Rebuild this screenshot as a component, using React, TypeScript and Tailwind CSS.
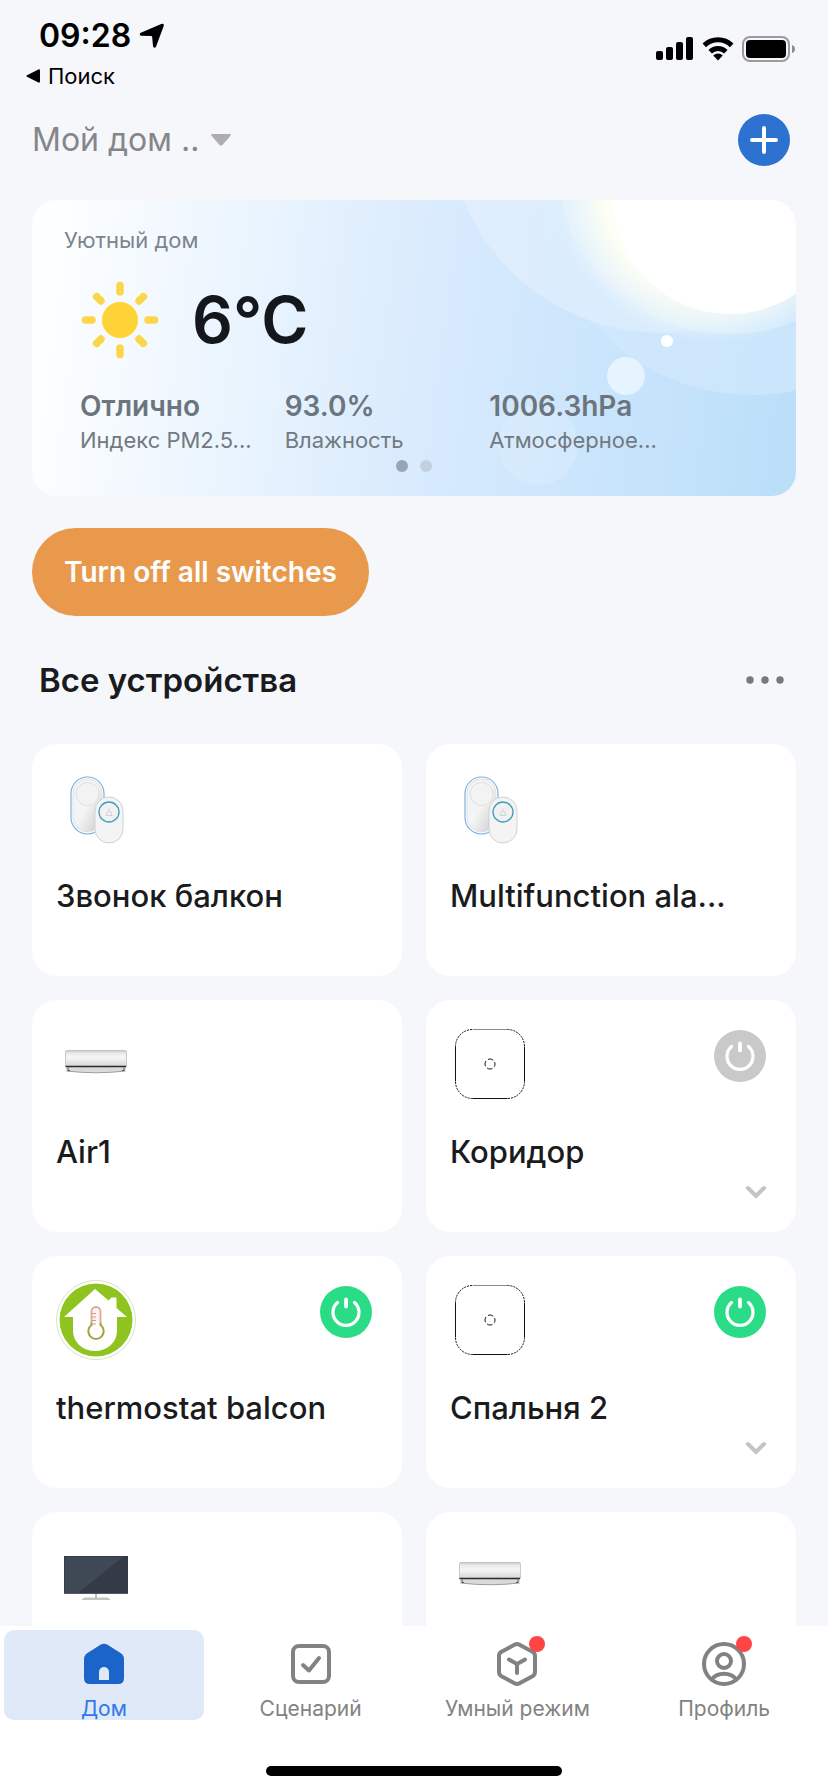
import { useState } from "react"

type Device = {
  id: number
  name?: string
  icon: "bell" | "air" | "router" | "thermostat" | "tv"
  power?: boolean
  expandable?: boolean
}

const initialDevices: Device[] = [
  { id: 1, name: "Звонок балкон", icon: "bell" },
  { id: 2, name: "Multifunction ala...", icon: "bell" },
  { id: 3, name: "Air1", icon: "air" },
  { id: 4, name: "Коридор", icon: "router", power: false, expandable: true },
  { id: 5, name: "thermostat balcon", icon: "thermostat", power: true },
  { id: 6, name: "Спальня 2", icon: "router", power: true, expandable: true },
  { id: 7, icon: "tv" },
  { id: 8, icon: "air" },
]

const weather = [
  { value: "Отлично", label: "Индекс PM2.5..." },
  { value: "93.0%", label: "Влажность" },
  { value: "1006.3hPa", label: "Атмосферное..." },
]

const tabs = [
  { id: "home", label: "Дом", badge: false },
  { id: "scene", label: "Сценарий", badge: false },
  { id: "smart", label: "Умный режим", badge: true },
  { id: "profile", label: "Профиль", badge: true },
]

function StatusBar() {
  return (
    <div className="flex items-start justify-between pt-4 text-black">
      <div>
        <div className="flex items-center gap-2 pl-[39px] text-[32px] leading-10 font-semibold">
          09:28
          <svg width="26" height="26" viewBox="0 0 26 26">
            <path d="M1.800 9.800 22.200 1.100Q25.600 0 24.600 3.200L17.200 23.200Q15.600 26.200 14 23.200L13.200 14.200Q13.100 13.100 12 13L2.400 12.800Q-0.600 11.800 1.800 9.800Z" />
          </svg>
        </div>
        <a href="#search" className="flex items-center gap-2 pl-[26px] text-[22px] leading-10">
          <svg width="14" height="14" viewBox="0 0 14 14">
            <path d="M1 6.200 12.400 0.400Q14 0 14 1.400V12.600Q14 14 12.400 13.600L1 7.800Q-0.400 7 1 6.200Z" />
          </svg>
          Поиск
        </a>
      </div>
      <div className="flex items-center gap-2 pt-5 pr-8">
        <svg width="38" height="26" viewBox="0 0 38 26">
          <rect x="0" y="15" width="7" height="9" rx="2" />
          <rect x="10" y="11" width="7" height="13" rx="2" />
          <rect x="20" y="6" width="7" height="18" rx="2" />
          <rect x="30" y="1" width="7" height="23" rx="2" />
        </svg>
        <svg width="32" height="26" viewBox="0 0 32 26">
          <path d="M16 24.500 11.200 19.600a6.800 6.800 0 0 1 9.600 0Z" />
          <path d="M8.200 15.800a11 11 0 0 1 15.600 0" fill="none" stroke="#000" strokeWidth="5" />
          <path d="M2.300 9.400a19.500 19.500 0 0 1 27.400 0" fill="none" stroke="#000" strokeWidth="5" />
        </svg>
        <svg width="54" height="26" viewBox="0 0 54 26">
          <rect x="1" y="1" width="46" height="24" rx="7" fill="none" stroke="#9c9c9f" strokeWidth="2" />
          <rect x="4" y="4" width="40" height="18" rx="4" />
          <path d="M50 9q3 1 3 4t-3 4Z" fill="#8c8c8f" />
        </svg>
      </div>
    </div>
  )
}

function WeatherBackground() {
  return (
    <svg className="absolute inset-0 h-full w-full" viewBox="0 0 764 296" preserveAspectRatio="xMaxYMin slice">
      <defs>
        <linearGradient id="sky" gradientUnits="userSpaceOnUse" x1="0" y1="200" x2="740" y2="300">
          <stop offset="0" stopColor="#fdfeff" />
          <stop offset="0.25" stopColor="#ebf5fe" />
          <stop offset="0.5" stopColor="#daebfd" />
          <stop offset="0.75" stopColor="#cae5fc" />
          <stop offset="1" stopColor="#bcdff9" />
        </linearGradient>
        <radialGradient id="glow" gradientUnits="userSpaceOnUse" cx="680" cy="-14" r="158">
          <stop offset="0.7" stopColor="#fdfef4" />
          <stop offset="0.84" stopColor="#f3faf6" stopOpacity="0.7" />
          <stop offset="1" stopColor="#e9f5fe" stopOpacity="0" />
        </radialGradient>
        <linearGradient id="ring" x1="0" y1="0" x2="1" y2="0">
          <stop offset="0" stopColor="#e6f1fd" stopOpacity="0.6" />
          <stop offset="0.5" stopColor="#e0effd" stopOpacity="0.6" />
          <stop offset="0.8" stopColor="#d2e8fc" stopOpacity="0" />
        </linearGradient>
      </defs>
      <rect width="764" height="296" fill="url(#sky)" />
      <circle cx="721" cy="-19" r="214" fill="#d3e9fd" opacity="0.6" />
      <circle cx="630" cy="-82" r="215" fill="url(#ring)" />
      <circle cx="698" cy="-40" r="174" fill="#eef7fe" opacity="0.35" />
      <circle cx="680" cy="-14" r="158" fill="url(#glow)" />
      <circle cx="698" cy="-3" r="117" fill="#fff" />
      <circle cx="506" cy="245" r="40" fill="#e3f0fc" opacity="0.35" />
      <circle cx="594" cy="176" r="19" fill="#e6f4ff" />
      <circle cx="635" cy="141" r="6" fill="#fff" />
    </svg>
  )
}

function Sun() {
  return (
    <svg width="80" height="80" viewBox="-40 -40 80 80" stroke="#fbd648" strokeWidth="7.500" strokeLinecap="round">
      <circle r="18" fill="#fed337" stroke="none" />
      {[0, 45, 90, 135, 180, 225, 270, 315].map((a) => (
        <path key={a} d={a % 90 ? "M0-27V-33" : "M0-28V-34.500"} transform={`rotate(${a})`} />
      ))}
    </svg>
  )
}

function WeatherCard() {
  return (
    <section className="relative mt-[34px] overflow-hidden rounded-3xl">
      <WeatherBackground />
      <div className="relative pt-6 pb-6">
        <p className="px-8 text-[22px] leading-8 text-[#7c848c]">Уютный дом</p>
        <div className="mt-6 flex items-center gap-8 pl-12">
          <Sun />
          <p className="text-[64px] leading-[80px] font-semibold text-[#14181d]">6°C</p>
        </div>
        <dl className="mt-7 grid grid-cols-3 pr-[102px] pl-12">
          {weather.map((w) => (
            <div key={w.label} className="flex flex-col-reverse whitespace-nowrap">
              <dt className="text-[22px] leading-8 text-[#72797f]">{w.label}</dt>
              <dd className="text-[28px] leading-9 font-semibold text-[#6c757d]">{w.value}</dd>
            </div>
          ))}
        </dl>
        <div className="mt-1 flex justify-center gap-3">
          <span className="size-3 rounded-full bg-[#98a6b3]" />
          <span className="size-3 rounded-full bg-[#c3d1df]" />
        </div>
      </div>
    </section>
  )
}

function DeviceIcon({ icon }: { icon: Device["icon"] }) {
  if (icon === "bell") {
    return (
      <svg width="80" height="80" viewBox="0 0 80 80">
        <defs>
          <linearGradient id="bellBody" x1="0" y1="0" x2="1" y2="1">
            <stop offset="0.5" stopColor="#f4f4f5" />
            <stop offset="1" stopColor="#c9c9cb" />
          </linearGradient>
        </defs>
        <rect x="15" y="9" width="33" height="57" rx="16.500" fill="#fff" stroke="#7fb2dd" strokeWidth="1.200" />
        <rect x="17" y="11" width="29" height="53" rx="14.500" fill="url(#bellBody)" stroke="#dfe1e4" />
        <circle cx="31.500" cy="26" r="11.500" fill="#f3f3f4" stroke="#d9d9db" strokeWidth="0.800" />
        <rect x="39" y="29" width="28" height="46" rx="14" fill="#f4f4f5" stroke="#d0d1d4" />
        <circle cx="53" cy="44" r="10" fill="#f1f1f2" stroke="#3d9dbb" strokeWidth="1.300" />
        <path d="M50 47.500c1.500-1 .8-4.500 3.200-4.800 2.200.3 1.500 3.800 3 4.800ZM53 40v2" fill="none" stroke="#d2d2d5" />
      </svg>
    )
  }
  if (icon === "air") {
    return (
      <svg width="80" height="80" viewBox="0 0 80 80">
        <defs>
          <linearGradient id="airBody" x1="0" y1="0" x2="0" y2="1">
            <stop offset="0" stopColor="#c6c6c6" />
            <stop offset="0.150" stopColor="#e9e9e9" />
            <stop offset="0.450" stopColor="#f6f6f6" />
            <stop offset="1" stopColor="#d6d6d6" />
          </linearGradient>
        </defs>
        <path d="M9.500 28Q9.500 26.500 11 26.500H69Q70.500 26.500 70.500 28V42.500H9.500Z" fill="url(#airBody)" stroke="#bdbdbd" strokeWidth="0.800" />
        <path d="M10 42.500H70L69.500 47Q40 50.500 10.500 47Z" fill="#d9d9d9" />
        <path d="M9.500 42.500H70" stroke="#2b2b2b" strokeWidth="1.300" />
        <path d="M10.500 47Q40 50.500 69.500 47" fill="none" stroke="#9d9d9d" />
        <path d="M12 43.500v3h2M68 43.500v3h-2" fill="none" stroke="#555" />
      </svg>
    )
  }
  if (icon === "router") {
    return (
      <svg width="80" height="80" viewBox="0 0 80 80" fill="none" stroke="#111">
        <path d="M22.500 5.500H57.500" stroke="#8a8a8a" />
        <path d="M74.500 22.500V57.500M57.500 74.500H22.500M5.500 57.500V22.500" />
        <path
          d="M57.500 5.500a17 17 0 0 1 17 17M74.500 57.500a17 17 0 0 1-17 17M22.500 74.500a17 17 0 0 1-17-17M5.500 22.500a17 17 0 0 1 17-17"
          strokeDasharray="2 1"
        />
        <circle cx="40" cy="40" r="5" strokeDasharray="5.500 2.350" strokeDashoffset="2.700" />
      </svg>
    )
  }
  if (icon === "thermostat") {
    return (
      <svg width="80" height="80" viewBox="0 0 80 80">
        <circle cx="40" cy="40" r="39.500" fill="#fff" stroke="#ccdcae" strokeWidth="0.800" />
        <circle cx="40" cy="40" r="36.500" fill="#8fc31f" />
        <path d="M39 9 52.500 20.500 55.500 17.500H60.500V28L71 37H61V51A22 20 0 0 1 17 51V37H8Z" fill="#fff" />
        <path d="M35.500 45V31.500a4.500 4.500 0 0 1 9 0V45" fill="#fdf1f1" stroke="#dfa5a0" strokeWidth="1.800" />
        <path d="M35.500 42.500V45a7.700 7.700 0 1 0 9 0V42.500" fill="#fff" stroke="#a3a33c" strokeWidth="2" />
        <path d="M36 33.500h4M36 37h4M36 40.500h4M36 44h4" stroke="#cda077" strokeWidth="1" />
      </svg>
    )
  }
  return (
    <svg width="80" height="80" viewBox="0 0 80 80">
      <rect x="8" y="20" width="64" height="38" fill="#343b47" />
      <path d="M9 21H67L22 57H9Z" fill="#3f4955" />
      <path d="M8 57.500H72" stroke="#555b64" />
      <path d="M40 58v4" stroke="#a5a5a5" strokeWidth="1.500" />
      <path d="M28 61.500H52L54.500 64H25.500Z" fill="#c4c4c2" />
    </svg>
  )
}

function DeviceCard({ device, onToggle }: { device: Device; onToggle: () => void }) {
  return (
    <article className="relative min-h-[232px] rounded-3xl bg-white p-6">
      <DeviceIcon icon={device.icon} />
      {device.name && (
        <h3 className="mt-7 truncate text-[31px] leading-10 font-medium text-[#1a1b1d]">{device.name}</h3>
      )}
      {device.power !== undefined && (
        <button
          aria-label={"Питание " + device.name}
          onClick={onToggle}
          className={
            "absolute top-[30px] right-[30px] size-[52px] rounded-full " +
            (device.power ? "bg-[#2bdc87]" : "bg-[#c9c9c9]")
          }
        >
          <svg width="52" height="52" viewBox="0 0 52 52" fill="none" stroke="#fff" strokeWidth="3.200" strokeLinecap="round">
            <path d="M17.500 16.500a13 13 0 1 0 17 0" />
            <path d="M26 13.500v7" strokeWidth="3.800" />
          </svg>
        </button>
      )}
      {device.expandable && (
        <button aria-label="Развернуть" className="absolute right-7 bottom-7">
          <svg width="24" height="24" viewBox="0 0 24 24" fill="none" stroke="#c4c4c4" strokeWidth="4" strokeLinecap="round">
            <path d="M4 8 12 16 20 8" />
          </svg>
        </button>
      )}
    </article>
  )
}

function TabIcon({ id }: { id: string }) {
  if (id === "home") {
    return (
      <svg width="48" height="48" viewBox="0 0 48 48">
        <path d="M20.500 4.700q3.500-2 7 0l13 8.200Q44 15.200 44 19V38q0 6-6 6H10q-6 0-6-6V19q0-3.800 3.500-6.100Z" fill="#1b64ca" />
        <path d="M19 40V32a5 5 0 0 1 10 0v8Z" fill="#dfe9f8" />
      </svg>
    )
  }
  if (id === "scene") {
    return (
      <svg width="48" height="48" viewBox="0 0 48 48" fill="none" stroke="#828282" strokeWidth="4" strokeLinecap="round" strokeLinejoin="round">
        <rect x="6" y="6" width="36" height="36" rx="6" />
        <path d="M16 25l6 5.500L32 18" />
      </svg>
    )
  }
  if (id === "smart") {
    return (
      <svg width="48" height="48" viewBox="0 0 48 48" fill="none" stroke="#828282" strokeWidth="4" strokeLinecap="round" strokeLinejoin="round">
        <path d="M21.500 4.800q2.500-1.400 5 0l13 7q2.500 1.400 2.500 4.200V32q0 2.800-2.500 4.200l-13 7q-2.500 1.400-5 0l-13-7Q6 34.800 6 32V16q0-2.800 2.500-4.200Z" />
        <path d="M16 19.500l8 4.500 8-4.500M24 24v9" />
      </svg>
    )
  }
  return (
    <svg width="48" height="48" viewBox="0 0 48 48" fill="none" stroke="#828282" strokeWidth="4">
      <circle cx="24" cy="24" r="20" />
      <circle cx="24" cy="21" r="7" />
      <path d="M12 39a14 11 0 0 1 24 0" />
    </svg>
  )
}

export default function App() {
  const [devices, setDevices] = useState(initialDevices)
  const [tab, setTab] = useState("home")

  const toggle = (id: number) => {
    setDevices((ds) => ds.map((d) => (d.id === id ? { ...d, power: !d.power } : d)))
  }

  const turnOffAll = () => {
    setDevices((ds) => ds.map((d) => (d.power ? { ...d, power: false } : d)))
  }

  return (
    <div className="flex h-screen flex-col bg-[#f5f7fb] font-['Inter','Liberation_Sans',sans-serif]">
      <StatusBar />

      <main className="min-h-0 flex-1 overflow-y-auto px-8 [scrollbar-width:none]">
        <header className="flex items-center justify-between pt-[18px] pr-1.5">
          <button className="flex items-center gap-3 text-[32px] leading-10 text-[#85868a]">
            Мой дом ..
            <svg width="20" height="12" viewBox="0 0 20 12" fill="#aeaeb2">
              <path d="M1.500 0H18.500Q20.500 0.300 19.300 2L11.400 11Q10 12.500 8.600 11L0.700 2Q-0.500 0.300 1.500 0Z" />
            </svg>
          </button>
          <button aria-label="Добавить" className="size-[52px] rounded-full bg-[#2d72d0]">
            <svg width="52" height="52" viewBox="0 0 52 52" stroke="#fff" strokeWidth="4" strokeLinecap="round">
              <path d="M26 14V38M14 26H38" />
            </svg>
          </button>
        </header>

        <WeatherCard />

        <button
          onClick={turnOffAll}
          className="mt-8 h-[88px] rounded-full bg-[#e9994c] px-8 text-[28px] font-semibold text-white"
        >
          Turn off all switches
        </button>

        <div className="mt-11 flex items-center justify-between pr-2.5 pl-[7px]">
          <h2 className="text-[33px] leading-10 font-semibold text-[#1a1b1f]">Все устройства</h2>
          <button aria-label="Ещё">
            <svg width="40" height="10" viewBox="0 0 40 10" fill="#77787b">
              <circle cx="4" cy="5" r="3.700" />
              <circle cx="19" cy="5" r="3.700" />
              <circle cx="34" cy="5" r="3.700" />
            </svg>
          </button>
        </div>

        <div className="mt-11 grid grid-cols-2 gap-6 pb-6">
          {devices.map((d) => (
            <DeviceCard key={d.id} device={d} onToggle={() => toggle(d.id)} />
          ))}
        </div>
      </main>

      <nav className="bg-white pt-1 pb-4">
        <div className="grid grid-cols-4 gap-[7px] px-1">
          {tabs.map((t) => (
            <button
              key={t.id}
              onClick={() => setTab(t.id)}
              className={
                "flex flex-col items-center gap-2.5 rounded-[10px] pt-2.5 " +
                (t.id === tab ? "bg-[#dfe9f8] text-[#3178ea]" : "text-[#828282]")
              }
            >
              <span className="relative">
                <TabIcon id={t.id} />
                {t.badge && <span className="absolute -top-1 -right-1 size-4 rounded-full bg-[#ff4444]" />}
              </span>
              <span className="text-[21px] leading-[22px]">{t.label}</span>
            </button>
          ))}
        </div>
        <div className="mx-auto mt-[46px] h-2.5 w-[296px] rounded-full bg-black" />
      </nav>
    </div>
  )
}
